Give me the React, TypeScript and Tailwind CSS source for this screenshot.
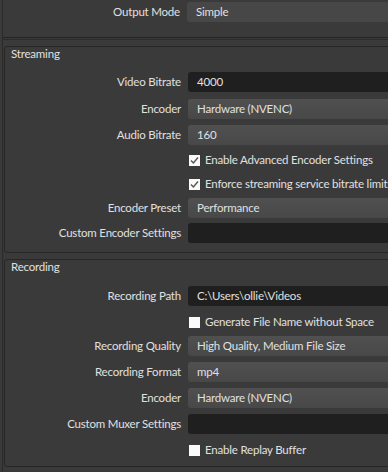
import React from "react";

const font = { fontFamily: 'Lato, "Noto Sans", sans-serif' };

function Label({ children }: { children: React.ReactNode }) {
  return (
    <div className="w-[185px] shrink-0 pr-[7px] text-right whitespace-nowrap">{children}</div>
  );
}

function Combo({ value }: { value: string }) {
  return (
    <div className="flex-1 h-[20px] rounded-l-[3px] bg-gradient-to-b from-[#505050] to-[#484848] pl-[9px] flex items-center whitespace-nowrap">
      {value}
    </div>
  );
}

function Input({ value }: { value?: string }) {
  return (
    <div className="flex-1 h-[20px] rounded-l-[3px] bg-[#1f1f1f] pl-[9px] flex items-center whitespace-nowrap">
      {value}
    </div>
  );
}

function Row({
  label,
  children,
  mt,
}: {
  label: string;
  children: React.ReactNode;
  mt: string;
}) {
  return (
    <div className={`flex items-center h-[20px] ${mt}`}>
      <Label>{label}</Label>
      {children}
    </div>
  );
}

function Check({ label, checked, mt }: { label: string; checked?: boolean; mt: string }) {
  return (
    <div className={`flex items-center h-[20px] ${mt}`}>
      <div className="w-[186px] shrink-0" />
      <div className="w-[11px] h-[11px] bg-[#fafafa] flex items-center justify-center shrink-0">
        {checked && (
          <svg width="9" height="9" viewBox="0 0 9 9">
            <path d="M1 4.5 L3.4 7 L8 1.5" stroke="#555" strokeWidth="1.4" fill="none" />
          </svg>
        )}
      </div>
      <div className="ml-[5px] whitespace-nowrap">{label}</div>
    </div>
  );
}

export default function App() {
  return (
    <div
      className="w-[388px] h-[472px] overflow-hidden bg-[#3a3a3a] text-[#e0e0e0] text-[11.5px] leading-none tracking-[-0.2px]"
      style={font}
    >
      <div className="w-[440px] h-full ml-[2px] border-l border-[#2a2a2a] flex flex-col">
        {/* Top */}
        <div className="flex items-center h-[20px] mt-[2px]">
          <div className="w-[184px] shrink-0 pr-[7px] text-right">Output Mode</div>
          <div className="flex-1 h-[20px] rounded-l-[3px] bg-[#474747] pl-[9px] flex items-center">
            Simple
          </div>
        </div>
        <div className="mt-[15px] h-[1px] bg-[#252525]" />
        <div className="mt-[1px] h-[1px] bg-[#2c2c2c]" />

        {/* Streaming */}
        <div className="mt-[6px] ml-[1px] h-[207px] border border-[#262626] rounded-[3px] flex flex-col">
          <div className="h-[13px] pl-[6px] pt-[1px]">
            <div>Streaming</div>
          </div>
          <div className="-ml-[2px] flex flex-col">
            <Row label="Video Bitrate" mt="mt-[12px]">
              <Input value="4000" />
            </Row>
            <Row label="Encoder" mt="mt-[7px]">
              <Combo value="Hardware (NVENC)" />
            </Row>
            <Row label="Audio Bitrate" mt="mt-[6px]">
              <Combo value="160" />
            </Row>
            <Check label="Enable Advanced Encoder Settings" checked mt="mt-[5px]" />
            <Check label="Enforce streaming service bitrate limits" checked mt="mt-[4px]" />
            <Row label="Encoder Preset" mt="mt-[4px]">
              <Combo value="Performance" />
            </Row>
            <Row label="Custom Encoder Settings" mt="mt-[5px]">
              <Input />
            </Row>
          </div>
        </div>

        {/* Recording */}
        <div className="mt-[6px] ml-[1px] h-[208px] border border-[#262626] rounded-[3px] flex flex-col">
          <div className="h-[13px] pl-[6px] pt-[1px]">
            <div>Recording</div>
          </div>
          <div className="-ml-[2px] flex flex-col">
            <Row label="Recording Path" mt="mt-[13px]">
              <Input value="C:\Users\ollie\Videos" />
            </Row>
            <Check label="Generate File Name without Space" mt="mt-[6px]" />
            <Row label="Recording Quality" mt="mt-[4px]">
              <Combo value="High Quality, Medium File Size" />
            </Row>
            <Row label="Recording Format" mt="mt-[6px]">
              <Combo value="mp4" />
            </Row>
            <Row label="Encoder" mt="mt-[6px]">
              <Combo value="Hardware (NVENC)" />
            </Row>
            <Row label="Custom Muxer Settings" mt="mt-[6px]">
              <Input />
            </Row>
            <Check label="Enable Replay Buffer" mt="mt-[6px]" />
          </div>
        </div>
      </div>
    </div>
  );
}
